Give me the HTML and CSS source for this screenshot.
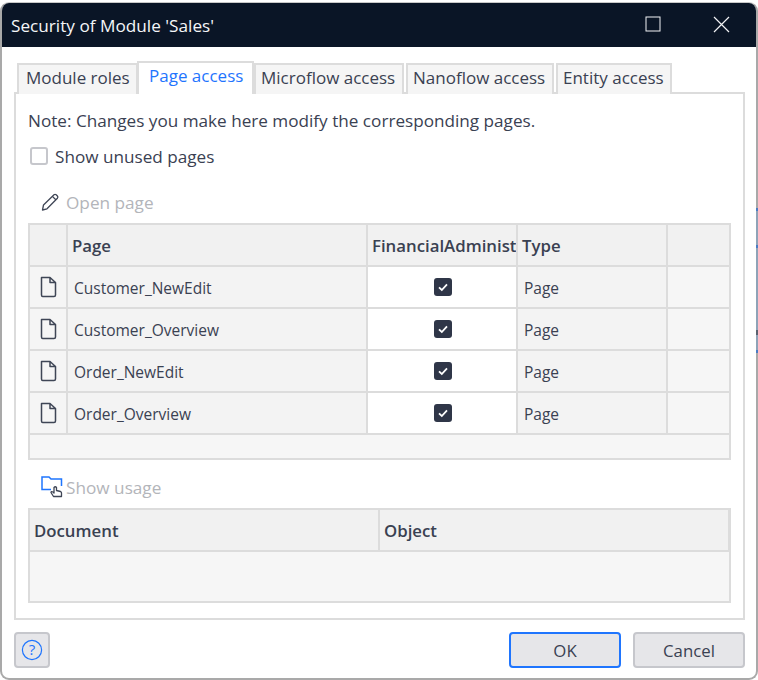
FILE: index.html
```html
<!DOCTYPE html>
<html lang="en">
<head>
<meta charset="utf-8">
<title>Security of Module 'Sales'</title>
<link rel="stylesheet" href="styles.css">
</head>
<body>
<div class="window">
  <header class="titlebar">
    <span class="title">Security of Module 'Sales'</span>
    <div class="win-controls">
      <svg class="win-icon" width="16" height="16" viewBox="0 0 16 16"><rect x="1" y="1" width="14" height="14" fill="none" stroke="#f2f3f5" stroke-width="1"/></svg>
      <svg class="win-icon" width="18" height="18" viewBox="0 0 18 18"><path d="M2 2 L17 17 M17 2 L2 17" fill="none" stroke="#f2f3f5" stroke-width="1.2"/></svg>
    </div>
  </header>
  <main class="body">
    <nav class="tabs">
      <div class="tab">Module roles</div>
      <div class="tab tab-active">Page access</div>
      <div class="tab tab-micro">Microflow access</div>
      <div class="tab">Nanoflow access</div>
      <div class="tab">Entity access</div>
    </nav>
    <section class="panel">
      <p class="note">Note: Changes you make here modify the corresponding pages.</p>
      <label class="check-row"><span class="checkbox"></span><span>Show unused pages</span></label>
      <div class="tool tool-open">
        <svg width="20" height="20" viewBox="0 0 20 20"><path d="M2.5 18 L3.5 13 L14 2.8 Q15 2 16.2 2.8 L17.4 4 Q18.4 5.2 17.4 6.2 L7 16.8 Z M12.4 4.4 L15.8 7.8" fill="none" stroke="#3f4656" stroke-width="1.3" stroke-linejoin="round"/></svg>
        <span>Open page</span>
      </div>
      <div class="grid pages">
        <div class="hc"></div><div class="hc">Page</div><div class="hc">FinancialAdminist</div><div class="hc">Type</div><div class="hc end"></div>

        <div class="ic"><svg class="doc" width="18" height="22" viewBox="0 0 18 22"><path d="M2.5 1.5 H11 L16.5 6.5 V19 Q16.5 20.5 15 20.5 H3.7 Q2.5 20.5 2.5 19 Z M11 1.5 V6.5 H16.5" fill="none" stroke="#3f4656" stroke-width="1.5" stroke-linejoin="round"/></svg></div>
        <div class="tc">Customer_NewEdit</div>
        <div class="cc"><span class="tick"><svg width="18" height="18" viewBox="0 0 18 18"><path d="M5 9.4 L7.8 12 L13 6.4" fill="none" stroke="#fff" stroke-width="1.8"/></svg></span></div>
        <div class="tc">Page</div><div class="tc end"></div>

        <div class="ic"><svg class="doc" width="18" height="22" viewBox="0 0 18 22"><path d="M2.5 1.5 H11 L16.5 6.5 V19 Q16.5 20.5 15 20.5 H3.7 Q2.5 20.5 2.5 19 Z M11 1.5 V6.5 H16.5" fill="none" stroke="#3f4656" stroke-width="1.5" stroke-linejoin="round"/></svg></div>
        <div class="tc">Customer_Overview</div>
        <div class="cc"><span class="tick"><svg width="18" height="18" viewBox="0 0 18 18"><path d="M5 9.4 L7.8 12 L13 6.4" fill="none" stroke="#fff" stroke-width="1.8"/></svg></span></div>
        <div class="tc">Page</div><div class="tc end"></div>

        <div class="ic"><svg class="doc" width="18" height="22" viewBox="0 0 18 22"><path d="M2.5 1.5 H11 L16.5 6.5 V19 Q16.5 20.5 15 20.5 H3.7 Q2.5 20.5 2.5 19 Z M11 1.5 V6.5 H16.5" fill="none" stroke="#3f4656" stroke-width="1.5" stroke-linejoin="round"/></svg></div>
        <div class="tc">Order_NewEdit</div>
        <div class="cc"><span class="tick"><svg width="18" height="18" viewBox="0 0 18 18"><path d="M5 9.4 L7.8 12 L13 6.4" fill="none" stroke="#fff" stroke-width="1.8"/></svg></span></div>
        <div class="tc">Page</div><div class="tc end"></div>

        <div class="ic"><svg class="doc" width="18" height="22" viewBox="0 0 18 22"><path d="M2.5 1.5 H11 L16.5 6.5 V19 Q16.5 20.5 15 20.5 H3.7 Q2.5 20.5 2.5 19 Z M11 1.5 V6.5 H16.5" fill="none" stroke="#3f4656" stroke-width="1.5" stroke-linejoin="round"/></svg></div>
        <div class="tc">Order_Overview</div>
        <div class="cc"><span class="tick"><svg width="18" height="18" viewBox="0 0 18 18"><path d="M5 9.4 L7.8 12 L13 6.4" fill="none" stroke="#fff" stroke-width="1.8"/></svg></span></div>
        <div class="tc">Page</div><div class="tc end"></div>

        <div class="grid-foot"></div>
      </div>
      <div class="tool tool-usage">
        <svg width="24" height="24" viewBox="0 0 24 24">
          <path d="M1 11 V2 H8 L10 4 H20.5 V11 M1 11 V14.5 H10" fill="none" stroke="#1f75fe" stroke-width="1.5"/>
          <path d="M12.5 21.5 L10 17.5 Q10 16 12 17 L13 18 V12.5 Q14.3 11 15.5 12.5 V15.5 L19.5 16.5 Q20.5 17 20.5 18 V21.5 Z" fill="#fff" stroke="#3f4656" stroke-width="1.3" stroke-linejoin="round"/>
        </svg>
        <span>Show usage</span>
      </div>
      <div class="grid usage">
        <div class="hc">Document</div><div class="hc end">Object</div>
        <div class="usage-empty"></div>
      </div>
    </section>
    <footer class="footer">
      <button class="btn help" type="button" aria-label="Help">
        <svg width="22" height="22" viewBox="0 0 22 22"><circle cx="11" cy="11" r="9.6" fill="none" stroke="#1f75fe" stroke-width="1.2"/><text x="11" y="16" text-anchor="middle" class="help-mark">?</text></svg>
      </button>
      <div class="footer-actions">
        <button class="btn primary" type="button">OK</button>
        <button class="btn" type="button">Cancel</button>
      </div>
    </footer>
  </main>
</div>
<div class="edge-strip"></div>
</body>
</html>
```
FILE: styles.css
```css
* { box-sizing: border-box; }
html, body { margin: 0; padding: 0; }
body {
  position: relative;
  width: 758px;
  height: 680px;
  background: #fff;
  overflow: hidden;
  font-family: "Open Sans", "Noto Sans", sans-serif;
  font-size: 17px;
  color: #3a4152;
}
.window {
  width: 758px;
  height: 678px;
  margin-top: 2px;
  border: 2px solid #a9a9a9;
  border-top: 1px solid #c8c8c8;
  border-radius: 9px;
  overflow: hidden;
  background: #fff;
  display: flex;
  flex-direction: column;
}
.edge-strip {
  position: absolute;
  top: 208px;
  right: 0;
  width: 2px;
  height: 145px;
  background: linear-gradient(to bottom,
    #4a7cc4 0, #4a7cc4 3px, #8fa3b8 3px, #8fa3b8 37px,
    #4a7cc4 37px, #4a7cc4 40px, #8fa3b8 40px, #8fa3b8 122px,
    #5a6270 122px, #5a6270 127px, #8fa3b8 127px, #8fa3b8 142px,
    #4a7cc4 142px, #4a7cc4 145px);
}
.titlebar {
  height: 44px;
  flex: none;
  background: #0a1526;
  color: #f5f6f8;
  display: flex;
  align-items: center;
  justify-content: space-between;
  padding: 0 26px 0 9px;
}
.title { font-size: 17.2px; }
.win-controls { display: flex; align-items: center; gap: 51px; margin-bottom: 3px; }
.win-icon { display: block; }
.body {
  flex: 1;
  display: flex;
  flex-direction: column;
  padding: 14px 10px 10px 12px;
  min-height: 0;
}
.tabs {
  display: flex;
  align-items: flex-end;
  padding-left: 3px;
  margin-bottom: -2px;
  position: relative;
  z-index: 1;
}
.tab {
  height: 31px;
  border: 2px solid #dcdcdc;
  border-bottom-width: 0;
  background: #f5f5f5;
  padding: 1px 0 0 8px;
  font-size: 17px;
  line-height: 24px;
  white-space: nowrap;
  margin-right: 2px;
}
.tab:first-child { width: 121px; margin-right: -1px; padding-left: 7px; }
.tab-active {
  height: 33px;
  width: 117px;
  margin-right: 0;
  background: #fff;
  color: #1f75fe;
  padding: 1px 0 0 10px;
  position: relative;
}
.tab-micro { width: 150px; padding-left: 5px; }
.tab:nth-child(4) { width: 148px; padding-left: 5px; }
.tab:nth-child(5) { width: 116px; margin-right: 0; padding-left: 5px; }
.panel {
  flex: 1;
  width: 731px;
  border: 2px solid #dcdcdc;
  padding: 0 12px;
  min-height: 0;
}
.note { margin: 16px 0 0 0; line-height: 22px; font-size: 17.15px; }
.check-row { display: flex; align-items: center; gap: 7px; margin: 13px 0 0 2px; height: 22px; font-size: 17.15px; }
.checkbox {
  width: 18px;
  height: 18px;
  border: 2px solid #c6c7cc;
  border-radius: 3px;
  background: #fff;
}
.tool {
  display: flex;
  align-items: center;
  color: #b3b5ba;
  font-size: 17.2px;
  height: 24px;
}
.tool-open { margin: 23px 0 0 12px; gap: 6px; }
.tool-usage { margin: 15px 0 0 13px; gap: 1px; }
.grid {
  display: grid;
  background: #f6f6f6;
  border: 2px solid #dcdcdc;
}
.pages {
  margin-top: 9px;
  height: 237px;
  grid-template-columns: 38px 300px 150px 150px 1fr;
  grid-template-rows: 42px repeat(4, 42px) 1fr;
}
.hc {
  background: #f1f1f1;
  border-right: 2px solid #dcdcdc;
  border-bottom: 2px solid #dcdcdc;
  font-weight: 600;
  font-size: 16.8px;
  line-height: 42px;
  padding-left: 4px;
  white-space: nowrap;
  overflow: hidden;
}
.hc.end, .tc.end { border-right: 0; }
.tc, .ic {
  background: #f3f3f3;
  border-right: 2px solid #dcdcdc;
  border-bottom: 2px solid #dcdcdc;
  font-size: 15.5px;
  line-height: 42px;
  padding-left: 6px;
  white-space: nowrap;
}
.tc.end { background: #f6f6f6; }
.ic { display: flex; align-items: center; padding: 0 0 1px 9px; background: #f5f5f5; }
.doc { display: block; }
.cc {
  background: #fff;
  border-right: 2px solid #dcdcdc;
  border-bottom: 2px solid #dcdcdc;
  display: flex;
  align-items: center;
  justify-content: center;
  padding: 0 0 1px 2px;
}
.tick {
  width: 18px;
  height: 18px;
  background: #2f3648;
  border-radius: 3px;
  display: block;
}
.tick svg { display: block; }
.grid-foot { grid-column: 1 / -1; }
.usage {
  margin-top: 9px;
  height: 95px;
  grid-template-columns: 350px 1fr;
  grid-template-rows: 42px 1fr;
}
.usage .hc.end { border-right: 1px solid #dcdcdc; }
.usage-empty { grid-column: 1 / -1; }
.footer {
  display: flex;
  justify-content: space-between;
  margin-top: 12px;
  width: 731px;
}
.footer-actions { display: flex; gap: 12px; }
.btn {
  width: 112px;
  height: 36px;
  border: 2px solid #c6c7cc;
  border-radius: 4px;
  background: #e6e6e9;
  color: #3a4152;
  font-family: inherit;
  font-size: 16.8px;
  padding: 0;
}
.primary { border-color: #1f75fe; }
.help { width: 36px; display: flex; align-items: center; justify-content: center; }
.help svg { display: block; }
.help-mark { font-size: 15px; fill: #1f75fe; font-family: "Open Sans", sans-serif; }
```
